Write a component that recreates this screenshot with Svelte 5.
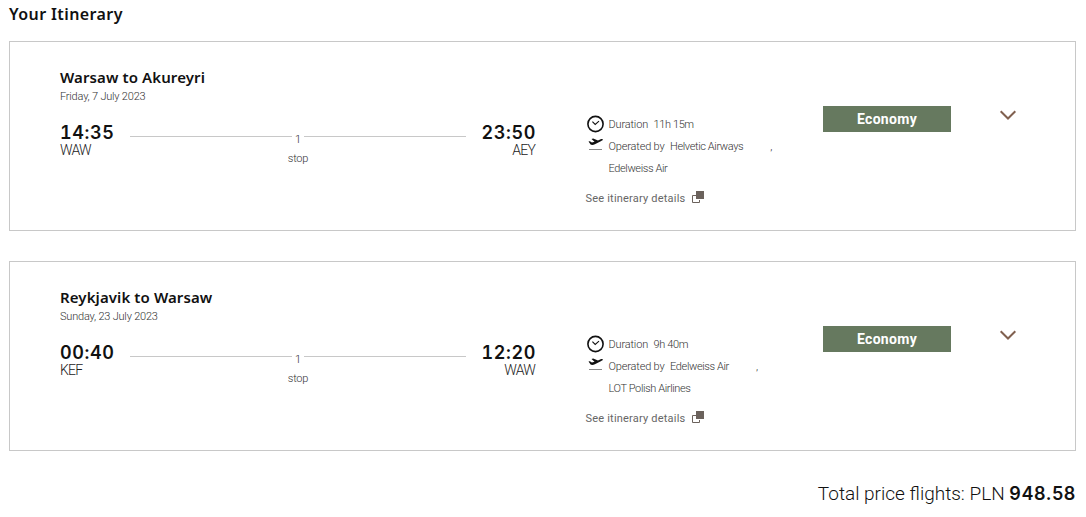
<style>
	:global(body) {
		margin: 0;
		background: #fff;
	}

	.itinerary {
		box-sizing: border-box;
		width: 1086px;
		height: 517px;
		padding: 4px 10px 0 9px;
		overflow: hidden;
		font-family: Roboto, "Liberation Sans", sans-serif;
		font-weight: 300;
		color: #111;
	}

	h1,
	h2,
	p {
		margin: 0;
		white-space: nowrap;
	}

	h1,
	h2 {
		font-family: "Noto Sans", "Liberation Sans", sans-serif;
		font-weight: 600;
	}

	h1 {
		height: 37px;
		font-size: 16px;
		line-height: 20px;
		letter-spacing: 0.4px;
	}

	.flight {
		box-sizing: border-box;
		display: grid;
		grid-template-columns: 476px 287px 128px 1fr;
		height: 190px;
		margin-bottom: 30px;
		padding-left: 50px;
		border: 1px solid #c8c8c8;
	}

	.route {
		padding-top: 25px;
	}

	h2 {
		font-size: 15px;
		line-height: 20px;
		letter-spacing: 0.1px;
	}

	.date {
		padding-top: 2px;
		font-size: 11px;
		line-height: 16px;
		letter-spacing: -0.2px;
		color: #333;
	}

	.leg {
		display: grid;
		grid-template-columns: 70px 1fr 70px;
		margin-top: 17px;
	}

	.time,
	.total strong {
		font-family: Inter, "Liberation Sans", sans-serif;
		font-weight: 600;
	}

	.time {
		font-size: 18px;
		line-height: 22px;
		letter-spacing: 0.6px;
		font-variant-numeric: tabular-nums;
	}

	.code {
		font-size: 14px;
		line-height: 13px;
		letter-spacing: -0.8px;
		color: #222;
	}

	.arrival {
		text-align: right;
	}

	.arrival .code {
		padding-right: 1px;
	}

	.stops {
		display: grid;
		grid-template-columns: 1fr 12px 1fr;
		align-content: start;
		padding-top: 5px;
		font-size: 11px;
		color: #333;
		text-align: center;
	}

	.line {
		height: 1px;
		margin-top: 9px;
		background: #c8c8c8;
	}

	.count {
		height: 24px;
		line-height: 26px;
	}

	.stopLabel {
		grid-column: 1 / -1;
		line-height: 16px;
		letter-spacing: -0.2px;
	}

	.details {
		padding: 72px 0 0 49.5px;
		font-size: 11px;
		color: #333;
	}

	.info {
		display: grid;
		grid-template-columns: 23px auto auto 1fr;
		line-height: 22px;
		letter-spacing: -0.38px;
		white-space: nowrap;
	}

	.info svg {
		margin-top: 1px;
	}

	.label {
		margin-right: 5.5px;
		letter-spacing: -0.17px;
	}

	.comma {
		margin-left: 27px;
	}

	.second {
		grid-column: 2 / -1;
	}

	.link {
		display: flex;
		align-items: center;
		gap: 7px;
		margin-top: 8px;
		font-weight: 400;
		line-height: 22px;
		letter-spacing: 0.2px;
		color: #666;
	}

	.link svg {
		margin-top: -3px;
	}

	.cabin {
		height: 26px;
		margin-top: 64px;
		background: #66795f;
		color: #fff;
		font-size: 14px;
		font-weight: 700;
		line-height: 26px;
		letter-spacing: 0.3px;
		text-align: center;
	}

	.toggle {
		align-self: start;
		width: 18px;
		height: 12px;
		margin: 67px 0 0 48px;
		padding: 0;
		border: 0;
		background: none;
	}

	svg {
		display: block;
	}

	.total {
		padding-top: 1px;
		font-size: 19px;
		line-height: 24px;
		letter-spacing: 0;
		text-align: right;
	}

	.total strong {
		font-size: 18px;
		letter-spacing: 0.6px;
	}
</style>

<script>
	const flights = [
		{
			title: "Warsaw to Akureyri",
			date: "Friday, 7 July 2023",
			from: ["14:35", "WAW"],
			to: ["23:50", "AEY"],
			duration: "11h 15m",
			airlines: ["Helvetic Airways", "Edelweiss Air"],
		},
		{
			title: "Reykjavik to Warsaw",
			date: "Sunday, 23 July 2023",
			from: ["00:40", "KEF"],
			to: ["12:20", "WAW"],
			duration: "9h 40m",
			airlines: ["Edelweiss Air", "LOT Polish Airlines"],
		},
	];
</script>

<main class="itinerary">
	<h1>Your Itinerary</h1>
	{#each flights as flight}
		<section class="flight">
			<div class="route">
				<h2>{flight.title}</h2>
				<p class="date">{flight.date}</p>
				<div class="leg">
					<div>
						<p class="time">{flight.from[0]}</p>
						<p class="code">{flight.from[1]}</p>
					</div>
					<div class="stops">
						<span class="line"></span>
						<span class="count">1</span>
						<span class="line"></span>
						<span class="stopLabel">stop</span>
					</div>
					<div class="arrival">
						<p class="time">{flight.to[0]}</p>
						<p class="code">{flight.to[1]}</p>
					</div>
				</div>
			</div>
			<div class="details">
				<div class="info">
					<svg width="19" height="18" viewBox="0 0 19 18" fill="none" stroke="#111">
						<circle cx="9.5" cy="9" r="7.6" stroke-width="1.6" />
						<path d="M6.4 6.7l2.8 2.7 3.8-3.2" stroke-width="1.1" />
					</svg>
					<span class="label">Duration</span>
					<span>{flight.duration}</span>
				</div>
				<div class="info">
					<svg width="19" height="18" viewBox="0 0 19 18">
						<path
							d="M2.5 4.6l1.4-.4 2 1.3 2.6-.7-3-2.9 1.7-.3 4.8 2 2.6-1.3c1.3-.5 2.3-.4 2.3.2 0 .7-1.1 1.2-2.1 1.7L8.9 7.3c-1.7.7-3.6.8-4.3.1z"
							fill="#111"
						/>
						<path d="M3 12.5h13" stroke="#888" />
					</svg>
					<span class="label">Operated by</span>
					<span>{flight.airlines[0]}</span>
					<span class="comma">,</span>
					<span class="second">{flight.airlines[1]}</span>
				</div>
				<div class="link">
					<span>See itinerary details</span>
					<svg width="13" height="13" viewBox="0 0 13 13">
						<path d="M4 4.5H.5v7h7V9" fill="none" stroke="#6b625c" />
						<path d="M4 0h8v8H4z" fill="#6b625c" />
					</svg>
				</div>
			</div>
			<div class="cabin">Economy</div>
			<button class="toggle" aria-label="Show fares">
				<svg width="18" height="12" viewBox="0 0 18 12">
					<path d="M1.7 2.2L9 9.5l7.3-7.3" fill="none" stroke="#80604f" stroke-width="2" />
				</svg>
			</button>
		</section>
	{/each}
	<p class="total">Total price flights: PLN <strong>948.58</strong></p>
</main>
